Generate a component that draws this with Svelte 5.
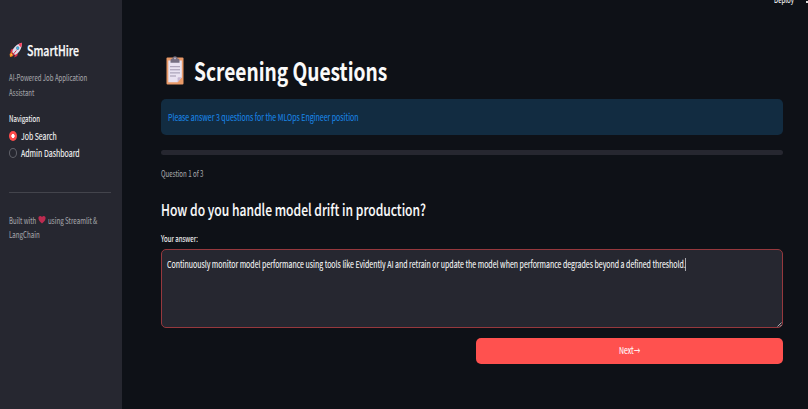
<script>
  const answer =
    'Continuously monitor model performance using tools like Evidently AI and retrain or update the model when performance degrades beyond a defined threshold.';

  // Condenses a line of text horizontally to the given width.
  function fit(node, width) {
    node.style.transform = `scaleX(${width / node.offsetWidth})`;
  }
</script>

{#snippet line(text, width)}
  <span class="slot" style:width="{width}px"><span class="fit" use:fit={width}>{text}</span></span>
{/snippet}

<div class="app">
  <aside>
    <h2>
      <svg class="rocket" width="14" height="16" viewBox="0 0 14 16">
        <path d="M1 15 0.6 12 3 9.5 5.2 12 3.2 14.4Z" fill="#f58220" />
        <path d="M1.4 14 1.8 12.2 3.2 11.2 4 12.2Z" fill="#ffc83d" />
        <path d="M5 6.5 2.2 7.5 1 10.8 4 9.6ZM9 10.8 8.2 14 5.2 15.4 6.2 12Z" fill="#d92c49" />
        <path d="M3.2 10.2C4 5.6 7 2.6 12.9 .8 13 6.8 10 11.2 5.7 13Z" fill="#dfdce9" />
        <path d="M9.3 2.4C10.5 1.6 11.6 1.1 12.9.8 13 2.5 12.6 4 12.1 5.4Z" fill="#f8415d" />
        <path d="M3.2 10.2 5.7 13 4.4 13.5 2.7 11.5Z" fill="#b3264a" />
        <ellipse cx="8.7" cy="6.1" rx="1.6" ry="1.9" fill="#637c96" />
        <ellipse cx="8.7" cy="6.1" rx="1" ry="1.2" fill="#32b5ed" />
        <path d="M7.4 8.5 4.4 12" stroke="#d92c49" stroke-width="1" />
      </svg>
      {@render line('SmartHire', 52)}
    </h2>
    <p class="tagline">
      {@render line('AI-Powered Job Application', 78.5)}
      {@render line('Assistant', 25.5)}
    </p>
    <div class="nav-label">{@render line('Navigation', 31)}</div>
    <label class="option"><i class="radio on"></i>{@render line('Job Search', 36)}</label>
    <label class="option"><i class="radio"></i>{@render line('Admin Dashboard', 58.5)}</label>
    <hr />
    <div class="credit">
      {@render line('Built with', 27)}
      <svg class="heart" width="8" height="9" viewBox="0 0 8 9">
        <path d="M4 8.4C2 7 .4 5.2 .4 3 .4.6 3 .2 4 2 5 .2 7.6.6 7.6 3 7.6 5.2 6 7 4 8.4Z" fill="#bd2b50" />
      </svg>
      {@render line('using Streamlit &', 49)}
    </div>
    <div class="credit">{@render line('LangChain', 30.5)}</div>
  </aside>

  <main>
    <header>
      {@render line('Deploy', 20)}
      <i class="dots"></i>
    </header>
    <h1>
      <svg class="clipboard" width="18" height="29" viewBox="0 0 18 29">
        <rect x=".5" y="1.5" width="17" height="27" rx="1" fill="#e99a68" />
        <path d="M2.3 4.5H15.8V21.3L11.6 26.3H2.3Z" fill="#e9e2f1" />
        <path d="M15.8 21.3 11.6 26.3V22.2Q11.6 21.3 12.4 21.3Z" fill="#c5b6d2" />
        <path d="M4.5 6.8V4.2Q4.5 2.6 6.5 2.6Q7 .3 9 .3T11.5 2.6Q13.5 2.6 13.5 4.2V6.8Z" fill="#766f82" />
        <circle cx="9" cy="2.4" r=".9" fill="#c4bdcc" />
        <path d="M4 10.7H14M4 13.8H14M4 16.9H14M4 20H10" stroke="#9f96ad" stroke-width="1" />
      </svg>
      {@render line('Screening Questions', 193)}
    </h1>
    <div class="info">{@render line('Please answer 3 questions for the MLOps Engineer position', 190.5)}</div>
    <div class="progress"></div>
    <div class="caption">{@render line('Question 1 of 3', 42.5)}</div>
    <h3>{@render line('How do you handle model drift in production?', 265)}</h3>
    <div class="label">{@render line('Your answer:', 37)}</div>
    <div class="answer">
      {@render line(answer, 518.5)}<i class="caret"></i>
      <svg class="grip" width="5" height="5" viewBox="0 0 5 5">
        <path d="M.5 4.5 4.5.5M3 4.5 4.5 3" stroke="#c9c9cc" stroke-width=".8" />
      </svg>
    </div>
    <button>{@render line('Next', 14.5)}{@render line('→', 6.5)}</button>
  </main>
</div>

<style>
  :global(body) {
    margin: 0;
    background: #0e1117;
  }
  .app {
    display: flex;
    width: 808px;
    height: 409px;
    overflow: hidden;
    background: #0e1117;
    color: #fafafa;
    font: 9.6px 'Noto Sans CJK JP', 'Noto Sans', sans-serif;
    -webkit-text-stroke: 0.08px currentColor;
  }
  .app * {
    box-sizing: border-box;
  }
  .slot {
    display: block;
    flex: none;
    white-space: nowrap;
  }
  .fit {
    display: inline-block;
    vertical-align: top;
    transform-origin: 0 50%;
  }
  aside {
    width: 122px;
    flex: none;
    padding: 41px 11px 0 8.5px;
    background: #262730;
  }
  h1, h2, h3, p {
    margin: 0;
  }
  h2 {
    display: flex;
    align-items: center;
    gap: 4px;
    height: 18px;
    font-size: 13.8px;
    line-height: 18px;
    font-weight: 500;
    -webkit-text-stroke-width: 0.25px;
  }
  .tagline {
    margin-top: 10.5px;
    font-size: 8.5px;
    line-height: 15px;
    color: #a1a2a7;
  }
  .nav-label {
    margin-top: 11.5px;
    font-size: 8.5px;
    line-height: 14px;
  }
  .option {
    display: flex;
    align-items: center;
    gap: 4px;
    height: 16.9px;
    line-height: 16px;
  }
  .nav-label + .option {
    margin-top: 2.3px;
  }
  .radio {
    width: 8px;
    height: 10px;
    border: 1px solid #62636b;
    border-radius: 50%;
  }
  .on {
    border: 0;
    background: radial-gradient(ellipse 1.6px 2.1px, #fff 85%, #ff4b4b 120%);
  }
  hr {
    height: 1px;
    margin: 30.6px 0 20px;
    border: 0;
    background: #43444c;
  }
  .credit {
    display: flex;
    align-items: center;
    gap: 2px;
    height: 14.5px;
    font-size: 8.5px;
    line-height: 14px;
    color: #a1a2a7;
  }
  main {
    flex: 1;
    display: flex;
    flex-direction: column;
    padding: 0 24.6px 0 38.6px;
  }
  header {
    display: flex;
    align-self: flex-end;
    gap: 12px;
    height: 6px;
    margin-right: -24.6px;
    font-size: 8.5px;
    line-height: 12px;
  }
  header .slot {
    margin-top: -7px;
  }
  .dots {
    width: 2px;
    height: 2px;
    margin-top: 1px;
    background: #ddd;
  }
  h1 {
    display: flex;
    align-items: center;
    gap: 10px;
    height: 36px;
    margin: 47px 0 0 5.6px;
    padding-bottom: 2px;
    font-size: 25.2px;
    line-height: 34px;
    font-weight: 700;
  }
  .clipboard {
    margin-top: 1px;
  }
  h1 .slot {
    margin-top: -1px;
  }
  .info {
    height: 36px;
    margin-top: 9.5px;
    padding: 0 7.6px;
    border-radius: 5px;
    background: #122c41;
    color: #1987e6;
    line-height: 36px;
  }
  .progress {
    height: 5px;
    margin-top: 15.8px;
    border-radius: 3px;
    background: #262730;
  }
  .caption {
    margin-top: 10.7px;
    font-size: 8.5px;
    line-height: 14px;
    color: #a0a1a5;
  }
  h3 {
    margin-top: 17px;
    font-size: 16.2px;
    line-height: 24px;
    font-weight: 500;
    -webkit-text-stroke-width: 0.1px;
  }
  .label {
    margin-top: 10px;
    font-size: 8.5px;
    line-height: 14px;
  }
  .answer {
    position: relative;
    display: flex;
    height: 79px;
    margin-top: 4.3px;
    padding: 7px 5.2px;
    border: 1px solid #96383d;
    border-radius: 5px;
    background: #262730;
    line-height: 15px;
  }
  .caret {
    width: 1px;
    height: 13px;
    margin-top: 1px;
    background: #aaaab0;
  }
  .grip {
    position: absolute;
    right: 0;
    bottom: 0;
  }
  button {
    display: flex;
    align-self: flex-end;
    justify-content: center;
    gap: 1px;
    width: 307.5px;
    height: 26px;
    margin-top: 10px;
    padding: 0;
    border: 0;
    border-radius: 5px;
    background: #ff514f;
    color: #fff;
    font: inherit;
    line-height: 25px;
  }
</style>
